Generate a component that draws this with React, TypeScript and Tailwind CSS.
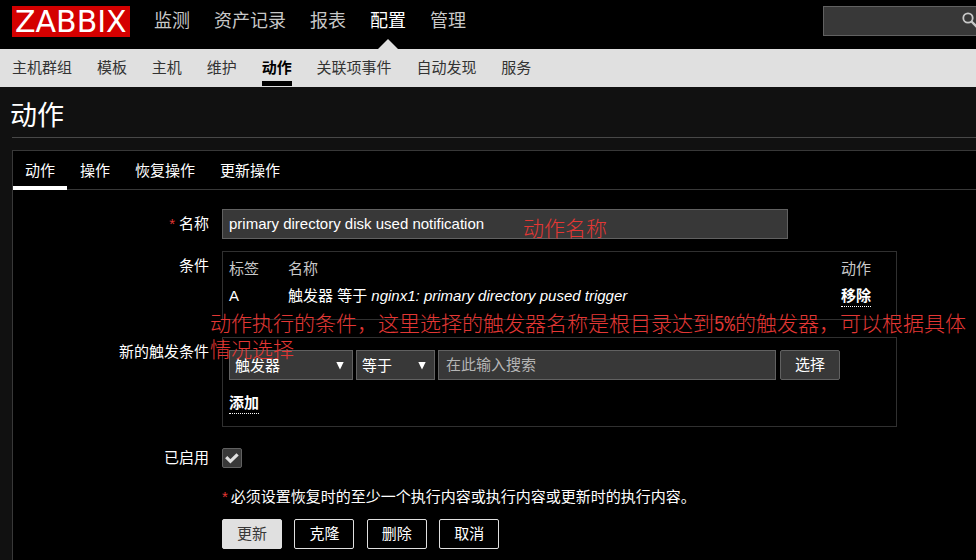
import type { ReactNode } from 'react';

const mainMenu = ['监测', '资产记录', '报表', '配置', '管理'];
const subMenu = ['主机群组', '模板', '主机', '维护', '动作', '关联项事件', '自动发现', '服务'];
const tabs = ['动作', '操作', '恢复操作', '更新操作'];

function Row({ label, required, className, children }: { label?: string; required?: boolean; className: string; children: ReactNode }) {
  return (
    <div className={`flex ${className}`}>
      <div className="mr-[13px] h-[30px] w-[196px] shrink-0 text-right leading-[30px] whitespace-nowrap">
        {required && <span className="mr-1 text-[#e33734]">*</span>}
        {label}
      </div>
      {children}
    </div>
  );
}

function Select({ value, className }: { value: string; className: string }) {
  return (
    <div className={`flex h-[30px] items-center justify-between border border-[#616161] bg-[#383838] pr-[8px] pl-[5px] ${className}`}>
      <span className="pt-[2px] leading-[28px]">{value}</span>
      <svg className="mt-[1px]" width="8" height="8" viewBox="0 0 8 8" fill="#fff">
        <path d="M0.3 0h7.4L4 7.6z" />
      </svg>
    </div>
  );
}

function LinkAction({ children }: { children: ReactNode }) {
  return <button type="button" className="flex h-5 items-start border-b border-dotted border-white leading-[18px] font-bold">{children}</button>;
}

export default function App() {
  return (
    <div className="relative flex h-[560px] w-[976px] flex-col overflow-hidden bg-[#111] font-['Liberation_Sans','Noto_Sans_CJK_SC',sans-serif] text-[15px] text-white">
      <header className="flex h-[49px] shrink-0 bg-black pt-[6px] pl-3">
        <div className="h-[31px] w-[118px] bg-[#d40000] pl-[3px] font-['DejaVu_Sans',sans-serif] text-[30px] leading-[31px] whitespace-nowrap">ZABBIX</div>
        <nav className="ml-6 flex gap-6 text-[18px] leading-[31px] text-[#c8c8c8]">
          {mainMenu.map((item) => (
            <a key={item} className={item === '配置' ? 'relative h-[43px] text-white' : 'h-[43px]'}>
              {item}
              {item === '配置' && (
                <svg className="absolute bottom-0 left-[8px]" width="20" height="10" viewBox="0 0 20 10" fill="#e0e0e0">
                  <path d="M0 10 10 0l10 10z" />
                </svg>
              )}
            </a>
          ))}
        </nav>
        <div className="-mr-3 ml-auto flex h-[30px] w-[165px] shrink-0 justify-end border border-[#616161] bg-[#383838] pt-[5px] pr-[8px]">
          <svg width="17" height="17" viewBox="0 0 17 17" fill="none" stroke="#c8c8c8">
            <circle cx="6" cy="6" r="4.7" strokeWidth="1.8" />
            <path d="m9.5 9.5 5.5 5.5" strokeWidth="2.4" />
          </svg>
        </div>
      </header>

      <nav className="flex h-[38px] shrink-0 gap-[24.9px] bg-[#e0e0e0] pl-3 leading-[38px] text-[#333]">
        {subMenu.map((item) => (
          <a key={item} className={item === '动作' ? 'h-[37px] border-b-[5px] border-black font-bold text-black' : 'h-[37px]'}>
            {item}
          </a>
        ))}
      </nav>

      <h1 className="ml-3 h-[51px] shrink-0 border-b border-[#484848] text-[27px] leading-[58px]">
        <span className="-ml-[2px]">动作</span>
      </h1>

      <main className="mt-3 -mr-px ml-3 flex-1 border border-b-0 border-[#383838] bg-black">
        <div className="flex h-[39px] gap-px border-b border-[#383838] leading-[40px]">
          {tabs.map((tab, i) => (
            <a key={tab} className={i === 0 ? 'h-[39px] border-b-4 border-white px-3' : 'px-3'}>
              {tab}
            </a>
          ))}
        </div>

        <form className="pt-[19px]">
          <Row label="名称" required className="h-[30px]">
            <div className="h-[30px] w-[566px] border border-[#616161] bg-[#383838] pl-[6px] leading-[28px]">primary directory disk used notification</div>
          </Row>

          <Row label="条件" className="mt-3 h-[69px]">
            <div className="h-[69px] w-[675px] border border-[#303030] pt-[3px] pl-[6px]">
              <div className="flex h-[27px] leading-[27px] text-[#c8c8c8]">
                <span className="w-[59px]">标签</span>
                <span className="w-[553px]">名称</span>
                <span>动作</span>
              </div>
              <div className="flex h-[27px] leading-[27px]">
                <span className="w-[59px]">A</span>
                <span className="w-[553px]">触发器 等于 <em>nginx1: primary directory pused trigger</em></span>
                <div className="pt-[5px]"><LinkAction>移除</LinkAction></div>
              </div>
            </div>
          </Row>

          <Row label="新的触发条件" className="mt-[17px] h-[90px]">
            <div className="h-[90px] w-[675px] border border-[#303030] pt-3 pl-[6px]">
              <div className="flex">
                <Select value="触发器" className="mr-[3px] w-[124px]" />
                <Select value="等于" className="mr-[3px] w-[79px]" />
                <div className="mr-1 h-[30px] w-[338px] border border-[#616161] bg-[#383838] pl-[7px] leading-[28px] text-[#b5b5b5]">在此输入搜索</div>
                <button type="button" className="h-[30px] w-[60px] rounded-[2px] border border-[#616161] bg-[#383838] leading-[28px]">选择</button>
              </div>
              <div className="pt-[14px]"><LinkAction>添加</LinkAction></div>
            </div>
          </Row>

          <Row label="已启用" className="mt-[16px] h-[30px]">
            <div className="mt-[5px] flex h-5 w-5 items-center justify-center rounded-[2px] border border-[#616161] bg-[#383838]">
              <svg width="14" height="12" viewBox="0 0 14 12" fill="none" stroke="#e0e0e0" strokeWidth="3.2">
                <path d="m1.2 5.2 4.2 4.1 7.2-7" />
              </svg>
            </div>
          </Row>

          <Row className="mt-[9px] h-[30px]">
            <p className="leading-[30px] whitespace-nowrap"><span className="mr-[3px] text-[#e33734]">*</span>必须设置恢复时的至少一个执行内容或执行内容或更新时的执行内容。</p>
          </Row>

          <div className="mt-[7px] ml-[209px] flex gap-[12.4px] leading-[28px]">
            <button type="button" className="h-[30px] w-[60px] rounded-[2px] border border-[#e0e0e0] bg-[#e0e0e0] text-[#383838]">更新</button>
            {['克隆', '删除', '取消'].map((action) => (
              <button key={action} type="button" className="h-[30px] w-[60px] rounded-[2px] border border-[#e0e0e0] bg-black">{action}</button>
            ))}
          </div>
        </form>
      </main>

      {/* Red notes written over the form */}
      <div className="absolute top-[216px] left-[523px] text-[21px] leading-[26px] font-light whitespace-nowrap text-[#e33734]">动作名称</div>
      <div className="absolute top-[311px] left-[210px] text-[21px] leading-[26px] font-light whitespace-nowrap text-[#e33734]">
        动作执行的条件，这里选择的触发器名称是根目录达到<span className="inline-block origin-[50%_75%] scale-y-[1.3] font-['Liberation_Mono',monospace] text-[17.5px] leading-[20px]">5%</span>的触发器，可以根据具体
        <br />
        情况选择
      </div>
    </div>
  );
}
